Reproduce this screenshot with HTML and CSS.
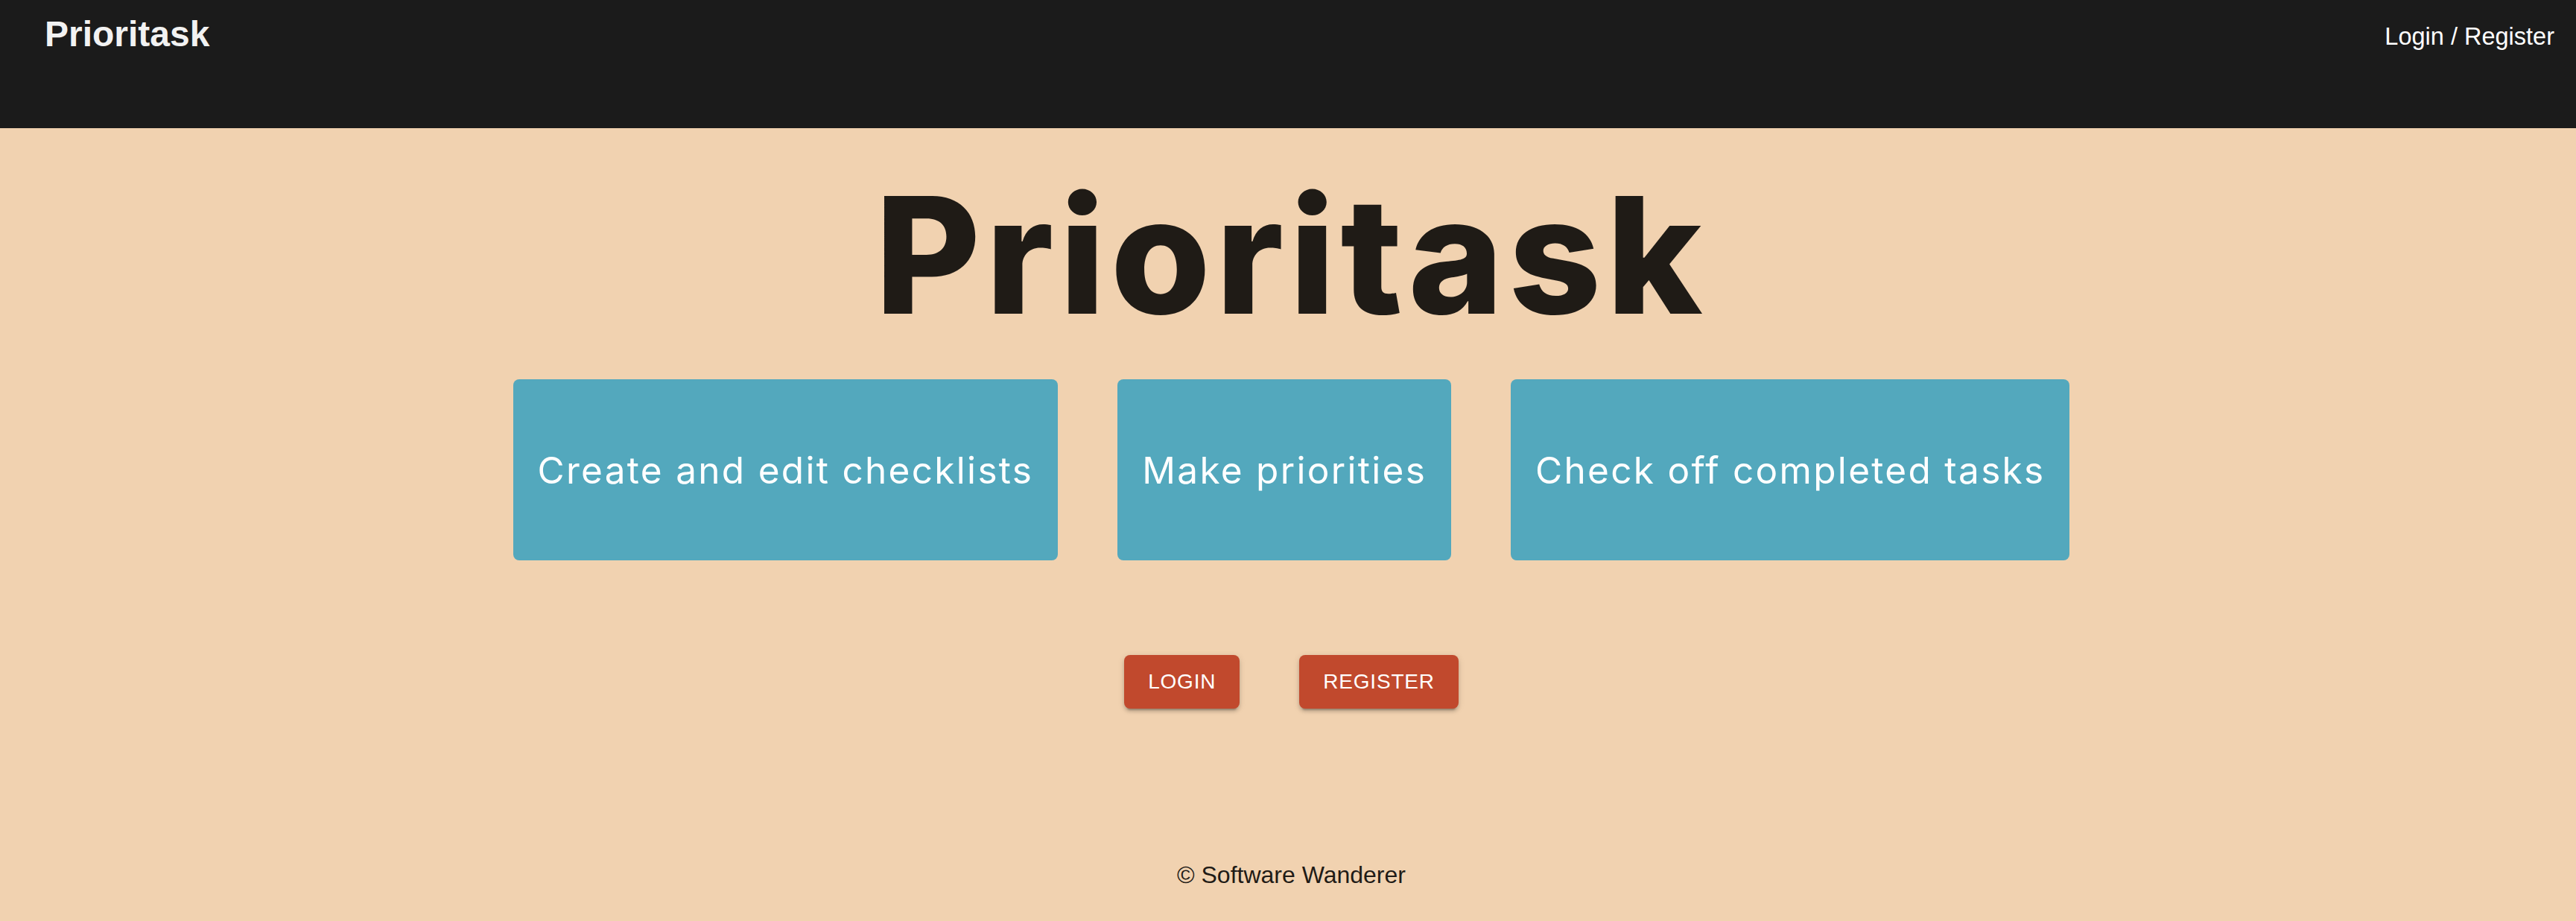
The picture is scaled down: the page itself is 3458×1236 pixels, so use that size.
FILE: index.html
```html
<!DOCTYPE html>
<html lang="en">
<head>
<meta charset="utf-8">
<title>Prioritask</title>
<link rel="stylesheet" href="styles.css">
</head>
<body>
<header class="topbar">
  <div class="brand">Prioritask</div>
  <a class="auth-link" href="#">Login / Register</a>
</header>
<main class="content">
  <h1 class="hero-title">Prioritask</h1>
  <div class="features">
    <div class="feature">Create and edit checklists</div>
    <div class="feature">Make priorities</div>
    <div class="feature">Check off completed tasks</div>
  </div>
  <div class="actions">
    <button class="btn">LOGIN</button>
    <button class="btn">REGISTER</button>
  </div>
</main>
<footer class="footer">© Software Wanderer</footer>
</body>
</html>
```
FILE: styles.css
```css
html, body {
  margin: 0;
  padding: 0;
}
body {
  background: #f1d2b0;
  font-family: "Liberation Sans", Arial, sans-serif;
  color: #1f1b16;
  min-height: 1236px;
}
.topbar {
  height: 172px;
  box-sizing: border-box;
  background: #1b1b1b;
  display: flex;
  justify-content: space-between;
  align-items: flex-start;
  padding: 18px 29px 0 60px;
}
.brand {
  color: #f2f2f2;
  font-size: 48px;
  font-weight: 700;
  line-height: 56px;
}
.auth-link {
  color: #ffffff;
  text-decoration: none;
  font-size: 32.5px;
  line-height: 56px;
  margin-top: 3px;
}
.content {
  display: flex;
  flex-direction: column;
  align-items: center;
  padding-left: 9px;
}
.hero-title {
  margin: 62px 0 0 0;
  font-family: Inter, "Liberation Sans", sans-serif;
  font-weight: 800;
  font-size: 217px;
  line-height: 217px;
  letter-spacing: 7px;
  color: #1f1b16;
}
.features {
  display: flex;
  gap: 80px;
  margin-top: 58px;
}
.feature {
  height: 243px;
  box-sizing: border-box;
  padding: 0 33px;
  display: flex;
  align-items: center;
  background: #53a8bd;
  border-radius: 8px;
  color: #ffffff;
  font-family: Inter, "Open Sans", sans-serif;
  font-weight: 400;
  font-size: 49.5px;
  letter-spacing: 2.3px;
  white-space: nowrap;
}
.actions {
  display: flex;
  gap: 80px;
  margin-top: 127px;
}
.btn {
  height: 72px;
  padding: 0 32px;
  border: none;
  border-radius: 8px;
  background: #c1492d;
  color: #ffffff;
  font-family: "Liberation Sans", Arial, sans-serif;
  font-size: 28px;
  letter-spacing: 0.8px;
  box-shadow: 0 6px 2px -4px rgba(0,0,0,0.2), 0 4px 4px 0 rgba(0,0,0,0.14), 0 2px 10px 0 rgba(0,0,0,0.12);
}
.footer {
  margin-top: 203px;
  padding-left: 9px;
  text-align: center;
  font-size: 32px;
  line-height: 40px;
  color: #1f1b16;
}
```
